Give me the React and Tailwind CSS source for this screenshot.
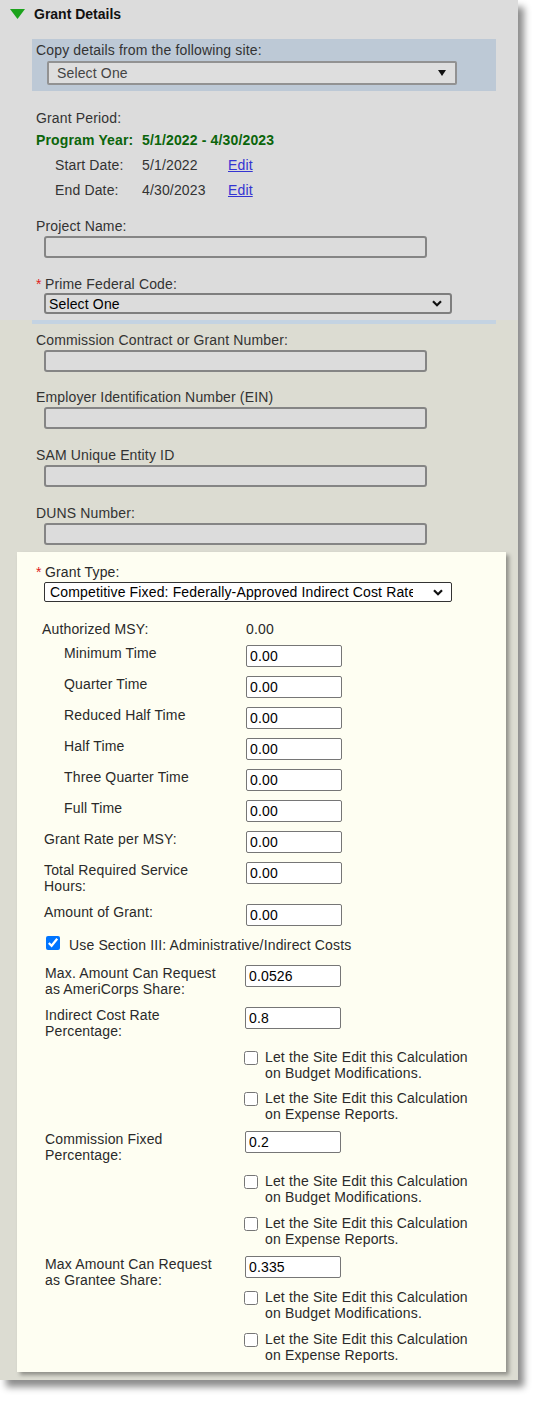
import React from 'react';

function Chevron() {
  return (
    <svg width="10" height="7" viewBox="0 0 10 7">
      <path d="M1 1.2 L5 5.2 L9 1.2" fill="none" stroke="#111" strokeWidth="2.2" />
    </svg>
  );
}

function GrayInput() {
  return (
    <input
      readOnly
      className="ml-[8px] mt-[2px] block h-[22px] w-[383px] rounded-[3px] border-2 border-[#858585] bg-[#dcdcdc] outline-none"
    />
  );
}

function Field({ label, value, pad = 'pl-[47px]', lw = 'w-[229px]', mt }) {
  return (
    <div className={`flex items-start ${mt}`}>
      <div className={`${lw} ${pad} leading-[16px] text-[#2a2a2a]`}>{label}</div>
      <input
        readOnly
        value={value}
        className="block h-[22px] w-[96px] rounded-[2px] border border-[#767676] bg-white px-[3px] text-[14px] leading-[16px] tracking-[0.15px] text-black outline-none"
      />
    </div>
  );
}

function SiteEdit({ what, mt }) {
  return (
    <div className={`ml-[227px] flex items-start ${mt}`}>
      <input type="checkbox" readOnly className="m-0 mt-[2px] h-[14px] w-[14px] shrink-0" />
      <div className="ml-[7px] leading-[16px] text-[#2a2a2a]">
        Let the Site Edit this Calculation
        <br />
        on {what}.
      </div>
    </div>
  );
}

export default function App() {
  return (
    <div className="min-h-[1403px] w-[541px] bg-white font-['Liberation_Sans',Arial,sans-serif] text-[14px] leading-[16px] tracking-[0.15px]">
      <div className="w-[518px] shadow-[6px_7px_7px_rgba(0,0,0,0.45)]">
        {/* top part */}
        <div className="bg-[#dcdcdc] pb-[6px]">
          <div className="flex h-[27px] items-center pl-[10px]">
            <svg width="15" height="10" viewBox="0 0 15 10">
              <polygon points="0,0 15,0 7.5,10" fill="#1ca31c" />
            </svg>
            <span className="ml-[9px] font-bold tracking-normal text-[#111]">Grant Details</span>
          </div>

          <div className="ml-[32px] mt-[12px] h-[52px] w-[464px] bg-[#bdc9d6] pt-[3px]">
            <div className="pl-[4px] text-[#333]">Copy details from the following site:</div>
            <div className="ml-[15px] mt-[3px] flex h-[24px] w-[410px] items-center justify-between rounded-[2px] border-2 border-[#929292] bg-[#dedede] pl-[8px] pr-[9px] text-[#444]">
              <span>Select One</span>
              <svg width="8" height="6" viewBox="0 0 8 6">
                <polygon points="0,0 8,0 4,6" fill="#111" />
              </svg>
            </div>
          </div>

          <div className="pl-[36px] text-[#333]">
            <div className="mt-[19px]">Grant Period:</div>
            <div className="mt-[6px] flex font-bold text-[#0b650b]">
              <span className="w-[106px]">Program Year:</span>
              <span>5/1/2022 - 4/30/2023</span>
            </div>
            <div className="mt-[9px] flex pl-[19px]">
              <span className="w-[87px]">Start Date:</span>
              <span className="w-[86px]">5/1/2022</span>
              <a className="text-[#3434d2] underline">Edit</a>
            </div>
            <div className="mt-[9px] flex pl-[19px]">
              <span className="w-[87px]">End Date:</span>
              <span className="w-[86px]">4/30/2023</span>
              <a className="text-[#3434d2] underline">Edit</a>
            </div>

            <div className="mt-[20px]">Project Name:</div>
            <GrayInput />

            <div className="mt-[18px] flex">
              <span className="w-[9px] text-[#e02020]">*</span>
              <span>Prime Federal Code:</span>
            </div>
            <div className="ml-[8px] mt-[1px] flex h-[21px] w-[408px] items-center justify-between rounded-[3px] border-2 border-[#7e7e7e] bg-[#dcdcdc] pl-[3px] pr-[8px] text-black">
              <span>Select One</span>
              <Chevron />
            </div>
          </div>
        </div>

        {/* lower part */}
        <div className="bg-[#dcdcd2] pb-[8px]">
          <div className="ml-[32px] h-[4px] w-[464px] bg-[#c4d3e2]" />
          <div className="pl-[36px] text-[#333]">
            <div className="mt-[8px]">Commission Contract or Grant Number:</div>
            <GrayInput />
            <div className="mt-[17px]">Employer Identification Number (EIN)</div>
            <GrayInput />
            <div className="mt-[18px]">SAM Unique Entity ID</div>
            <GrayInput />
            <div className="mt-[18px]">DUNS Number:</div>
            <GrayInput />
          </div>

          <div className="ml-[17px] mt-[7px] w-[489px] bg-[#fefef2] pb-[9px] pt-[12px] shadow-[3px_3px_4px_rgba(0,0,0,0.35)]">
            <div className="flex pl-[19px] text-[#2a2a2a]">
              <span className="w-[9px] text-[#e02020]">*</span>
              <span>Grant Type:</span>
            </div>
            <div className="ml-[27px] mt-[2px] flex h-[20px] w-[408px] items-center justify-between rounded-[2px] border border-[#333] bg-white pl-[5px] pr-[8px] text-black">
              <span className="w-[363px] overflow-hidden whitespace-nowrap">
                Competitive Fixed: Federally-Approved Indirect Cost Rate
              </span>
              <Chevron />
            </div>

            <div className="mt-[19px] flex text-[#2a2a2a]">
              <span className="w-[229px] pl-[25px]">Authorized MSY:</span>
              <span>0.00</span>
            </div>

            <Field mt="mt-[8px]" label="Minimum Time" value="0.00" />
            <Field mt="mt-[9px]" label="Quarter Time" value="0.00" />
            <Field mt="mt-[9px]" label="Reduced Half Time" value="0.00" />
            <Field mt="mt-[9px]" label="Half Time" value="0.00" />
            <Field mt="mt-[9px]" label="Three Quarter Time" value="0.00" />
            <Field mt="mt-[9px]" label="Full Time" value="0.00" />
            <Field mt="mt-[9px]" pad="pl-[27px]" label="Grant Rate per MSY:" value="0.00" />
            <Field
              mt="mt-[9px]"
              pad="pl-[27px]"
              label={<>Total Required Service<br />Hours:</>}
              value="0.00"
            />
            <Field mt="mt-[10px]" pad="pl-[27px]" label="Amount of Grant:" value="0.00" />

            <div className="ml-[29px] mt-[10px] flex items-start">
              <input
                type="checkbox"
                readOnly
                checked
                className="m-0 h-[14px] w-[14px] shrink-0 accent-[#0075ff]"
              />
              <span className="ml-[9px] mt-[1px] text-[#2a2a2a]">
                Use Section III: Administrative/Indirect Costs
              </span>
            </div>

            <Field
              mt="mt-[12px]"
              pad="pl-[28px]"
              lw="w-[228px]"
              label={<>Max. Amount Can Request<br />as AmeriCorps Share:</>}
              value="0.0526"
            />
            <Field
              mt="mt-[10px]"
              pad="pl-[28px]"
              lw="w-[228px]"
              label={<>Indirect Cost Rate<br />Percentage:</>}
              value="0.8"
            />
            <SiteEdit mt="mt-[10px]" what="Budget Modifications" />
            <SiteEdit mt="mt-[9px]" what="Expense Reports" />

            <Field
              mt="mt-[9px]"
              pad="pl-[28px]"
              lw="w-[228px]"
              label={<>Commission Fixed<br />Percentage:</>}
              value="0.2"
            />
            <SiteEdit mt="mt-[10px]" what="Budget Modifications" />
            <SiteEdit mt="mt-[10px]" what="Expense Reports" />

            <Field
              mt="mt-[9px]"
              pad="pl-[28px]"
              lw="w-[228px]"
              label={<>Max Amount Can Request<br />as Grantee Share:</>}
              value="0.335"
            />
            <SiteEdit mt="mt-[1px]" what="Budget Modifications" />
            <SiteEdit mt="mt-[10px]" what="Expense Reports" />
          </div>
        </div>
      </div>
    </div>
  );
}
